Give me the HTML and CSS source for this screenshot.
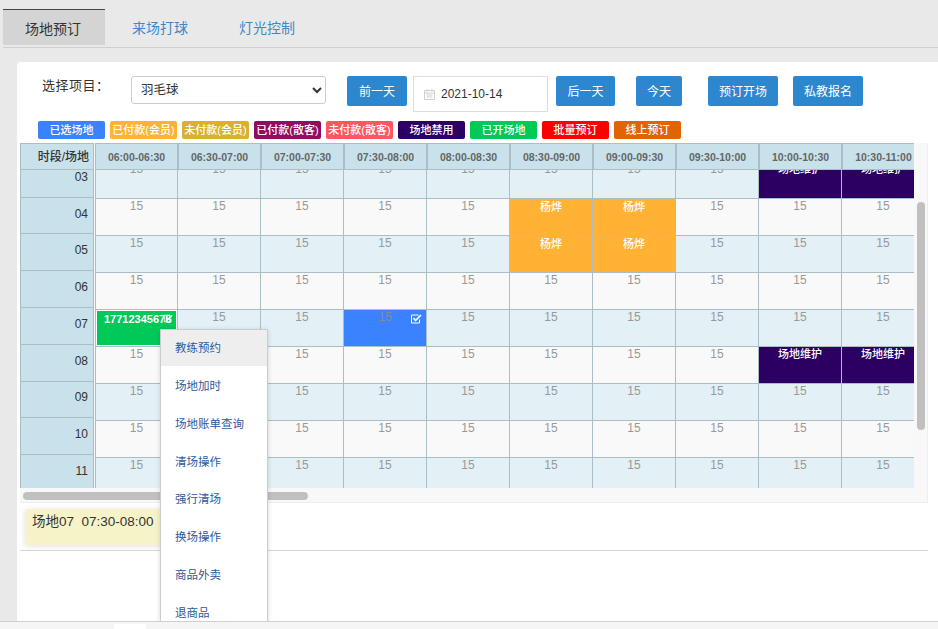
FILE: index.html
```html
<!DOCTYPE html>
<html lang="zh-CN">
<head>
    <meta charset="UTF-8">
    <title>场地预订</title>
    <link rel="stylesheet" href="styles.css">
</head>
<body>

    <div class="tabs">
        <a class="tab active">场地预订</a>
        <a class="tab">来场打球</a>
        <a class="tab">灯光控制</a>
    </div>

    <div class="card">
        <div class="toolbar">
            <label class="toolbar-label">选择项目：</label>
            <select class="sport">
                <option>羽毛球</option>
            </select>
            <button class="btn btn-prev">前一天</button>
            <div class="date">
                <svg class="date-icon" width="13" height="13" viewBox="0 0 13 13">
                    <path d="M1.5 2.5h10v9h-10zM1.5 5h10M4 1v2.5M9 1v2.5M3.5 7h6M3.5 9h6" fill="none" stroke="#cfcfcf"/>
                </svg>
                <span>2021-10-14</span>
            </div>
            <button class="btn btn-next">后一天</button>
            <button class="btn btn-today">今天</button>
            <button class="btn btn-open">预订开场</button>
            <button class="btn btn-coach">私教报名</button>
        </div>

        <div class="legend">
            <span class="tag picked">已选场地</span>
            <span class="tag member-paid">已付款(会员)</span>
            <span class="tag member-unpaid">未付款(会员)</span>
            <span class="tag guest-paid">已付款(散客)</span>
            <span class="tag guest-unpaid">未付款(散客)</span>
            <span class="tag banned">场地禁用</span>
            <span class="tag opened">已开场地</span>
            <span class="tag batch">批量预订</span>
            <span class="tag online">线上预订</span>
        </div>

        <div class="sheet">
            <div class="sheet-main">
                <div class="side">
                    <div class="side-head">时段/场地</div>
                    <div class="side-body">
                        <div class="side-rows">
                            <div class="side-row">03</div>
                            <div class="side-row">04</div>
                            <div class="side-row">05</div>
                            <div class="side-row">06</div>
                            <div class="side-row">07</div>
                            <div class="side-row">08</div>
                            <div class="side-row">09</div>
                            <div class="side-row">10</div>
                            <div class="side-row">11</div>
                        </div>
                    </div>
                </div>
                <div class="slots">
                    <table class="slot-head">
                        <tr>
                            <th>06:00-06:30</th><th>06:30-07:00</th><th>07:00-07:30</th><th>07:30-08:00</th><th>08:00-08:30</th>
                            <th>08:30-09:00</th><th>09:00-09:30</th><th>09:30-10:00</th><th>10:00-10:30</th><th>10:30-11:00</th>
                        </tr>
                    </table>
                    <div class="slot-body">
                        <table class="slot-table">
                            <tr class="alt">
                                <td>15</td><td>15</td><td>15</td><td>15</td><td>15</td><td>15</td><td>15</td><td>15</td>
                                <td class="maint">场地维护</td><td class="maint">场地维护</td>
                            </tr>
                            <tr>
                                <td>15</td><td>15</td><td>15</td><td>15</td><td>15</td>
                                <td class="booked">杨烨</td><td class="booked">杨烨</td>
                                <td>15</td><td>15</td><td>15</td>
                            </tr>
                            <tr class="alt">
                                <td>15</td><td>15</td><td>15</td><td>15</td><td>15</td>
                                <td class="booked">杨烨</td><td class="booked">杨烨</td>
                                <td>15</td><td>15</td><td>15</td>
                            </tr>
                            <tr>
                                <td>15</td><td>15</td><td>15</td><td>15</td><td>15</td><td>15</td><td>15</td><td>15</td><td>15</td><td>15</td>
                            </tr>
                            <tr class="alt">
                                <td class="opened-cell">17712345678
                                    <svg class="tick" viewBox="0 0 12 10">
                                        <path d="M8.500 1h-7v8h8V5.500" fill="none" stroke="#fff"/>
                                        <path d="M3.500 4l2 2.500L11 1" fill="none" stroke="#fff" stroke-width="1.600"/>
                                    </svg>
                                </td>
                                <td>15</td><td>15</td>
                                <td class="picked-cell">15
                                    <svg class="tick" viewBox="0 0 12 10">
                                        <path d="M8.500 1h-7v8h8V5.500" fill="none" stroke="#fff"/>
                                        <path d="M3.500 4l2 2.500L11 1" fill="none" stroke="#fff" stroke-width="1.600"/>
                                    </svg>
                                </td>
                                <td>15</td><td>15</td><td>15</td><td>15</td><td>15</td><td>15</td>
                            </tr>
                            <tr>
                                <td>15</td><td>15</td><td>15</td><td>15</td><td>15</td><td>15</td><td>15</td><td>15</td>
                                <td class="maint">场地维护</td><td class="maint">场地维护</td>
                            </tr>
                            <tr class="alt">
                                <td>15</td><td>15</td><td>15</td><td>15</td><td>15</td><td>15</td><td>15</td><td>15</td><td>15</td><td>15</td>
                            </tr>
                            <tr>
                                <td>15</td><td>15</td><td>15</td><td>15</td><td>15</td><td>15</td><td>15</td><td>15</td><td>15</td><td>15</td>
                            </tr>
                            <tr class="alt">
                                <td>15</td><td>15</td><td>15</td><td>15</td><td>15</td><td>15</td><td>15</td><td>15</td><td>15</td><td>15</td>
                            </tr>
                        </table>
                    </div>
                </div>
                <div class="vscroll"><div class="vthumb"></div></div>
            </div>
            <div class="hscroll"><div class="hthumb"></div></div>
        </div>

        <div class="hint">场地07&nbsp;&nbsp;07:30-08:00</div>
        <div class="rule"></div>

        <ul class="menu">
            <li class="hover">教练预约</li>
            <li>场地加时</li>
            <li>场地账单查询</li>
            <li>清场操作</li>
            <li>强行清场</li>
            <li>换场操作</li>
            <li>商品外卖</li>
            <li>退商品</li>
        </ul>
    </div>

    <div class="footer"><div class="footer-tab"></div></div>

</body>
</html>
```

FILE: styles.css
```css
* {
    box-sizing: border-box;
}

html, body {
    height: 100%;
}

body {
    margin: 0;
    display: flex;
    flex-direction: column;
    overflow: hidden;
    background: #e9e9e9;
    color: #333;
    font-family: "Liberation Sans", "Noto Sans CJK SC", sans-serif;
}

/* tabs */
.tabs {
    display: flex;
    gap: 5px;
    height: 48px;
    margin-left: 3px;
    padding-top: 9px;
    border-bottom: 1px solid #cfcfcf;
    flex: none;
}

.tab {
    width: 102px;
    height: 36px;
    padding-right: 2px;
    line-height: 38px;
    text-align: center;
    font-size: 14px;
    color: #3a8ac9;
}

.tab.active {
    background: #d4d4d4;
    border-top: 1px solid #444;
    color: #333;
}

/* card */
.card {
    position: relative;
    flex: 1;
    min-height: 0;
    margin: 14px 0 0 17px;
    padding-top: 14px;
    overflow: hidden;
    background: #fff;
    border-top-left-radius: 4px;
}

.toolbar {
    display: flex;
    align-items: flex-start;
    height: 36px;
}

.toolbar-label {
    width: 114px;
    padding-left: 25px;
    line-height: 20px;
    font-size: 13px;
    letter-spacing: 0.5px;
}

.sport {
    width: 195px;
    height: 28px;
    padding-left: 5px;
    background: #fff;
    border: 1px solid #ccc;
    border-radius: 3px;
    color: #333;
    font-family: inherit;
    font-size: 12.500px;
}

.btn {
    height: 30px;
    padding: 0 0 1px;
    border: none;
    border-radius: 2px;
    background: #2d87cf;
    color: #fff;
    font-family: inherit;
    font-size: 12px;
}

.btn-prev { width: 60px; margin-left: 21px; }
.btn-next { width: 59px; margin-left: 8px; }
.btn-today { width: 46px; margin-left: 21px; }
.btn-open { width: 70px; margin-left: 26px; }
.btn-coach { width: 70px; margin-left: 15px; }

.date {
    display: flex;
    align-items: center;
    gap: 5px;
    width: 135px;
    height: 36px;
    margin-left: 6px;
    padding-left: 9px;
    border: 1px solid #ddd;
    font-size: 12px;
    color: #333;
}

/* legend */
.legend {
    display: flex;
    gap: 5px;
    margin: 9px 0 0 21px;
}

.tag {
    width: 67px;
    height: 18px;
    line-height: 18px;
    border-radius: 2px;
    text-align: center;
    white-space: nowrap;
    font-size: 11px;
    font-weight: 500;
    color: #fff;
}

.picked { background: #3a82ff; }
.member-paid { background: #ffb233; }
.member-unpaid { background: #d9b12f; }
.guest-paid { background: #900c5f; }
.guest-unpaid { background: #ff5660; }
.banned { background: #2c0063; }
.opened { background: #00c957; }
.batch { background: #ff0000; }
.online { background: #e26400; }

/* booking sheet */
.sheet {
    width: 908px;
    height: 360px;
    margin: 4px 0 0 3px;
    background: #f8f8f8;
    border-right: 1px solid #eee;
    border-bottom: 1px solid #eee;
}

.sheet-main {
    display: flex;
    height: 345px;
}

.side {
    width: 75px;
    flex: none;
}

.side-head {
    height: 27px;
    line-height: 27px;
    margin-right: 1px;
    padding-right: 4px;
    text-align: right;
    background: #c8e1ea;
    border: 1px solid #a9bfc4;
    font-size: 12px;
    font-weight: 500;
}

.side-body {
    height: 318px;
    overflow: hidden;
}

.side-rows {
    margin-top: -9.200px;
}

.side-row {
    display: flex;
    align-items: center;
    justify-content: flex-end;
    height: 36.800px;
    margin-right: 1px;
    padding: 0 5px 4px 0;
    background: #c8e1ea;
    border-left: 1px solid #a9bfc4;
    border-right: 1px solid #a9bfc4;
    border-bottom: 1px solid #a9bfc4;
    font-size: 12px;
}

.slots {
    width: 819px;
    flex: none;
    overflow: hidden;
}

table {
    table-layout: fixed;
    border-collapse: separate;
    border-spacing: 0;
}

.slot-head {
    width: 831px;
}

.slot-head th {
    height: 27px;
    padding: 0;
    background: #c8e1ea;
    border-top: 1px solid #a9bfc4;
    border-bottom: 1px solid #a9bfc4;
    border-right: 2px solid #a9bfc4;
    font-size: 10.500px;
    font-weight: bold;
    color: #666;
    white-space: nowrap;
}

.slot-head th:first-child {
    width: 84px;
    border-left: 1px solid #a9bfc4;
}

.slot-body {
    height: 318px;
    overflow: hidden;
}

.slot-table {
    width: 830px;
    margin-top: -8px;
}

.slot-table td {
    position: relative;
    height: 37px;
    padding: 0;
    vertical-align: top;
    text-align: center;
    line-height: 14px;
    background: #f9f9f9;
    border-right: 1px solid #a9bfc4;
    border-bottom: 1px solid #a9bfc4;
    font-size: 12px;
    color: #999;
}

.slot-table td:first-child {
    border-left: 1px solid #a9bfc4;
}

.slot-table .alt td {
    background: #e3f0f5;
}

.slot-table td.booked {
    padding-top: 1px;
    background: #ffb233;
    color: #fff;
    font-size: 11px;
    font-weight: 500;
}

.slot-table td.maint {
    background: #2c0063;
    color: #fff;
    font-size: 11px;
    font-weight: 500;
}

.slot-table td.opened-cell {
    padding: 2px 0 0 8px;
    text-align: left;
    background: #00c957;
    box-shadow: inset 0 0 0 1px #fff;
    color: #fff;
    font-size: 11px;
    font-weight: bold;
    white-space: nowrap;
}

.slot-table td.picked-cell {
    background: #3a82ff;
    color: #8a8a7f;
}

.tick {
    position: absolute;
    top: 4px;
    right: 4px;
    width: 12px;
    height: 10px;
}

.opened-cell .tick {
    right: 4px;
    width: 10px;
    height: 9px;
}

.vscroll {
    flex: 1;
    padding: 59px 0 0 3px;
}

.vthumb {
    width: 8px;
    height: 228px;
    border-radius: 4px;
    background: #c0c0c0;
}

.hscroll {
    height: 14px;
    padding: 4px 0 0 3px;
}

.hthumb {
    width: 285px;
    height: 8px;
    border-radius: 4px;
    background: #c0c0c0;
}

/* selected slot hint */
.hint {
    width: 150px;
    height: 36px;
    margin: 6px 0 0 8px;
    padding: 4px 0 0 7px;
    line-height: 18px;
    background: #f7f3c8;
    border-radius: 3px;
    box-shadow: 0 1px 6px rgba(0, 0, 0, 0.12);
    font-size: 13.500px;
    white-space: nowrap;
}

.rule {
    width: 908px;
    margin: 5px 0 0 3px;
    border-top: 1px solid #d4d4d4;
}

/* context menu */
.menu {
    position: absolute;
    top: 267px;
    left: 143px;
    width: 108px;
    margin: 0;
    padding: 0;
    list-style: none;
    background: #fff;
    border: 1px solid #ccc;
    box-shadow: 0 1px 5px rgba(0, 0, 0, 0.15);
}

.menu li {
    height: 37.800px;
    padding: 12px 0 0 14px;
    line-height: 16px;
    font-size: 11.500px;
    color: #2a5a9c;
}

.menu li.hover {
    height: 36px;
    padding-top: 10px;
    background: #eeeeee;
}

/* bottom strip */
.footer {
    flex: none;
    height: 8px;
    padding-left: 114px;
    background: #f5f5f5;
    border-top: 1px solid #cfcfcf;
}

.footer-tab {
    width: 32px;
    height: 8px;
    margin-top: 2px;
    background: #fff;
    border-radius: 2px 2px 0 0;
}
```
